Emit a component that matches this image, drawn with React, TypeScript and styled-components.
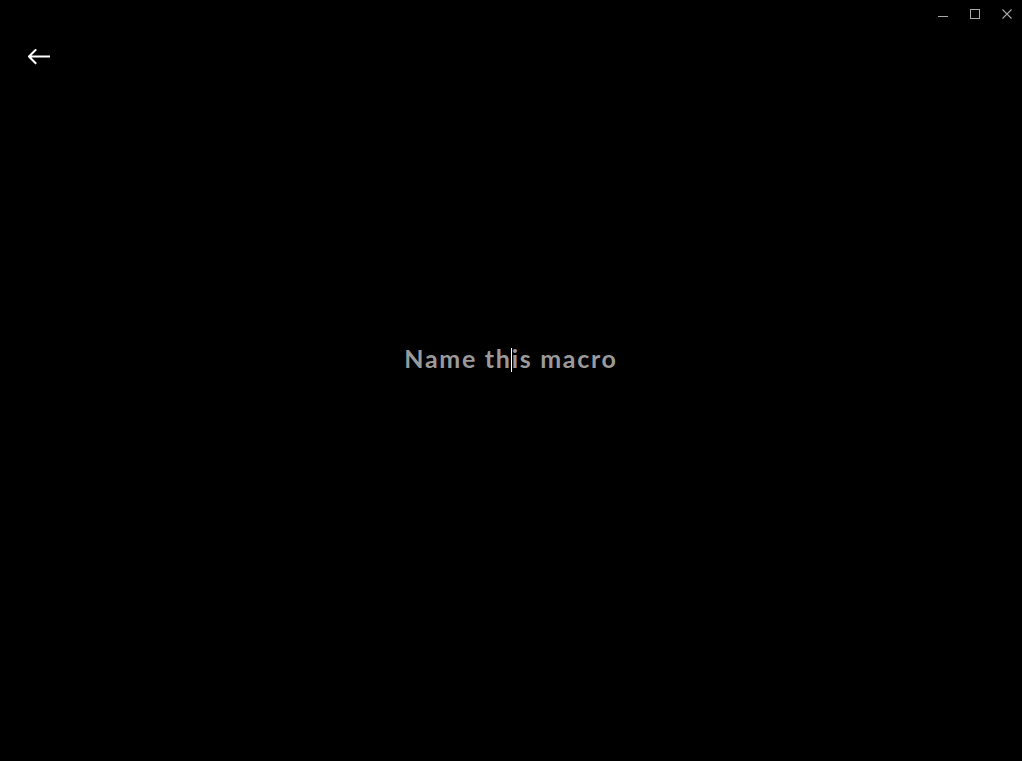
import React from "react";
import styled, { createGlobalStyle } from "styled-components";

const GlobalStyle = createGlobalStyle`
  html, body {
    margin: 0;
    padding: 0;
    background: #000000;
  }
  #root {
    min-height: 100vh;
  }
`;

const Window = styled.div`
  display: flex;
  flex-direction: column;
  width: 100%;
  height: 100vh;
  background: #000000;
  overflow: hidden;
  font-family: Lato, "Liberation Sans", sans-serif;
`;

const TitleBar = styled.div`
  display: flex;
  justify-content: flex-end;
  align-items: flex-start;
  gap: 22px;
  height: 28px;
  padding: 9px 10px 0 0;
  box-sizing: border-box;
`;

const WinButton = styled.button`
  display: flex;
  width: 10px;
  height: 10px;
  padding: 0;
  border: none;
  background: transparent;
  color: #a8a8a8;
  cursor: default;
`;

const BackRow = styled.div`
  display: flex;
  padding: 21px 0 0 28px;
`;

const BackButton = styled.button`
  display: flex;
  width: 22px;
  height: 16px;
  padding: 0;
  border: none;
  background: transparent;
  color: #ffffff;
  cursor: pointer;
`;

const Content = styled.div`
  flex: 1;
  display: flex;
  justify-content: center;
  padding-top: 278px;
`;

const NameField = styled.div`
  display: flex;
  align-items: flex-start;
  font-size: 25px;
  line-height: 30px;
  font-weight: 700;
  letter-spacing: 1.7px;
  color: #9a9a9a;
  white-space: pre;
`;

const Caret = styled.span`
  display: inline-block;
  width: 1px;
  height: 24px;
  margin-top: 5px;
  margin-left: -1px;
  margin-right: 0;
  background: #ffffff;
`;

export default function App() {
  return (
    <>
      <GlobalStyle />
      <Window>
        <TitleBar>
          <WinButton aria-label="Minimize">
            <svg width="10" height="10" viewBox="0 0 10 10">
              <line x1="0" y1="7.5" x2="10" y2="7.5" stroke="currentColor" strokeWidth="1" />
            </svg>
          </WinButton>
          <WinButton aria-label="Maximize">
            <svg width="10" height="10" viewBox="0 0 10 10">
              <rect x="0.5" y="0.5" width="9" height="9" fill="none" stroke="currentColor" strokeWidth="1" />
            </svg>
          </WinButton>
          <WinButton aria-label="Close">
            <svg width="10" height="10" viewBox="0 0 10 10">
              <path d="M0.5 0.5 L9.5 9.5 M9.5 0.5 L0.5 9.5" stroke="currentColor" strokeWidth="1.1" fill="none" />
            </svg>
          </WinButton>
        </TitleBar>
        <BackRow>
          <BackButton aria-label="Back">
            <svg width="22" height="16" viewBox="0 0 22 16">
              <path
                d="M21 7.5 H1.5 M7.5 1 L1 7.5 L7.5 14"
                stroke="currentColor"
                strokeWidth="2"
                fill="none"
                strokeLinecap="square"
              />
            </svg>
          </BackButton>
        </BackRow>
        <Content>
          <NameField>
            <span>Name th</span>
            <Caret />
            <span>is macro</span>
          </NameField>
        </Content>
      </Window>
    </>
  );
}
